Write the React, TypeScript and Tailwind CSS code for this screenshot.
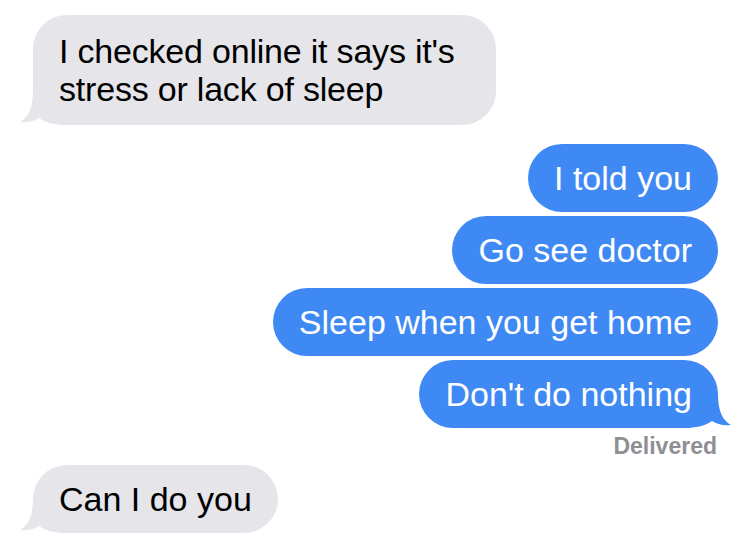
import React from 'react';

const GRAY = '#e5e5ea';
const BLUE = '#3f89f5';

const Tail = ({ side, color }: { side: 'left' | 'right'; color: string }) => (
  <svg
    width="46"
    height="34"
    viewBox="0 0 46 34"
    className={
      side === 'left'
        ? 'absolute left-[-13px] bottom-0'
        : 'absolute right-[-13px] bottom-0 -scale-x-100'
    }
  >
    <path d="M46 0 L13 0 C13 16 9 26 0 31 C8 32 14 30 19 27 C26 32 36 34 46 34 Z" fill={color} />
  </svg>
);

interface BubbleProps {
  text: string;
  me?: boolean;
  tail?: boolean;
  className?: string;
}

const Bubble: React.FC<BubbleProps> = ({ text, me, tail, className = '' }) => (
  <div
    className={`relative rounded-[34px] px-[26px] text-[34px] leading-[38px] ${
      me ? 'self-end bg-[#3f89f5] text-white' : 'self-start bg-[#e5e5ea] text-black'
    } ${className}`}
  >
    {tail && <Tail side={me ? 'right' : 'left'} color={me ? BLUE : GRAY} />}
    <span className="relative">{text}</span>
  </div>
);

export default function App() {
  return (
    <div
      className="w-[750px] h-[554px] overflow-hidden bg-white flex flex-col px-[32px] pt-[15px]"
      style={{ fontFamily: '"Liberation Sans", Arial, sans-serif' }}
    >
      <Bubble
        text="I checked online it says it's stress or lack of sleep"
        tail
        className="ml-px w-[463px] py-[17px] tracking-[-0.2px]"
      />

      <div className="mt-[19px] flex flex-col gap-[4px]">
        <Bubble me text="I told you" className="py-[15px]" />
        <Bubble me text="Go see doctor" className="py-[15px]" />
        <Bubble me text="Sleep when you get home" className="py-[15px]" />
        <Bubble me tail text="Don't do nothing" className="py-[15px]" />
      </div>

      <div className="self-end mt-[5px] mr-px text-[23px] leading-[26px] font-bold text-[#8e8e93]">
        Delivered
      </div>

      <Bubble text="Can I do you" tail className="ml-px mt-[6px] py-[15px]" />
    </div>
  );
}
